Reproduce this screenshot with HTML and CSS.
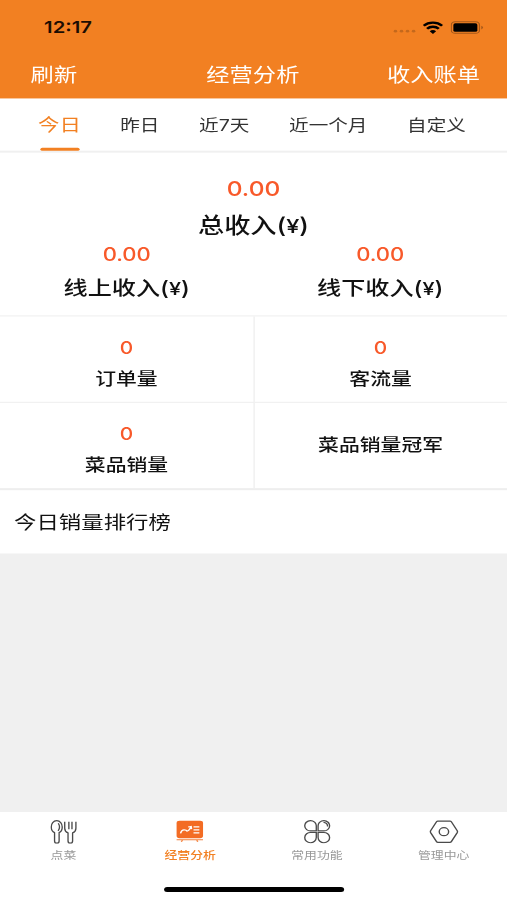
FILE: index.html
```html
<!DOCTYPE html>
<html lang="zh-CN">
<head>
  <meta charset="UTF-8" />
  <meta name="viewport" content="width=device-width, initial-scale=1" />
  <title>经营分析</title>
  <link rel="stylesheet" href="styles.css">
</head>
<body>
  <div class="screen">
    <header class="header">
      <div class="status">
        <span class="time">12:17</span>
        <div class="status-icons">
          <svg class="dots" width="19" height="4" viewBox="0 0 20 4"><g fill="#c4681c"><circle cx="2" cy="2" r="1.500"/><circle cx="7.200" cy="2" r="1.500"/><circle cx="12.400" cy="2" r="1.500"/><circle cx="17.600" cy="2" r="1.500"/></g></svg>
          <svg class="wifi" width="17" height="13" viewBox="0 0 17 13"><g fill="none" stroke="#000" stroke-width="2.3"><path d="M1 4.6a10.6 10.6 0 0 1 15 0"/><path d="M3.7 7.6a6.8 6.8 0 0 1 9.6 0"/></g><path d="M8.500 12.800L5.900 10.200a3.700 3.700 0 0 1 5.200 0z"/></svg>
          <svg class="battery" width="27" height="13" viewBox="0 0 27 13"><rect x=".5" y=".6" width="23" height="11.600" rx="3.200" fill="none" stroke="#a4571a"/><rect x="2.200" y="2.200" width="19.600" height="8.400" rx="1.600"/><path d="M25 4.700v3.600q1.400-.6 1.400-1.800t-1.400-1.800z" fill="#a4571a"/></svg>
        </div>
      </div>
      <nav class="nav">
        <span class="nav-left">刷新</span>
        <span class="nav-title">经营分析</span>
        <span class="nav-right">收入账单</span>
      </nav>
    </header>

    <div class="tabs">
      <span class="tab active">今日</span>
      <span class="tab">昨日</span>
      <span class="tab">近7天</span>
      <span class="tab">近一个月</span>
      <span class="tab">自定义</span>
    </div>

    <section class="income">
      <div class="total">
        <div class="value">0.00</div>
        <div class="label">总收入(<span class="yen">¥</span>)</div>
      </div>
      <div class="split">
        <div class="part">
          <div class="value">0.00</div>
          <div class="label">线上收入(<span class="yen">¥</span>)</div>
        </div>
        <div class="part">
          <div class="value">0.00</div>
          <div class="label">线下收入(<span class="yen">¥</span>)</div>
        </div>
      </div>
    </section>

    <section class="grid">
      <div class="cell"><div class="value">0</div><div class="label">订单量</div></div>
      <div class="cell"><div class="value">0</div><div class="label">客流量</div></div>
      <div class="cell"><div class="value">0</div><div class="label">菜品销量</div></div>
      <div class="cell"><div class="label">菜品销量冠军</div></div>
    </section>

    <div class="ranking">今日销量排行榜</div>
    <main class="list"></main>

    <footer class="tabbar">
      <div class="items">
        <div class="item">
          <svg width="22" height="24" viewBox="0 0 26 24" preserveAspectRatio="none" fill="none" stroke="#4a4a4a" stroke-width="1.300" stroke-linejoin="round"><path d="M6.300 1C3 1 1 4 1 7.300c0 2.800 1.200 4.700 3.200 5.700v8.200a2.200 2.200 0 0 0 4.400 0V13c2-1 3-2.900 3-5.700C11.600 4 9.500 1 6.300 1z"/><path d="M7.800 3.600c1.500 2.400 1.500 5.400-.2 7.600"/><path d="M14 2.200v6.300c0 2.300 1.200 3.800 3.200 4.700v8a2.200 2.200 0 0 0 4.400 0v-8c2-.9 3.200-2.400 3.200-4.700V2.200M18 2.200v7.300M21 2.200v7.300"/></svg>
          <span>点菜</span>
        </div>
        <div class="item active">
          <svg width="26" height="24" viewBox="0 0 26 24" preserveAspectRatio="none"><rect x="2.200" y="1.200" width="21.600" height="17.300" rx="2.400" fill="#f36c24"/><path d="M2.200 20h21.600M7 20.600l-1 1.400M18.600 20.600l1 1.400" fill="none" stroke="#f4803c" stroke-width="1.100"/><path d="M5.400 13.700q.8-3.400 2.800-3.500t2.500 1.200q1.600-.2 3.200-4.300M11.600 7.300l2.500-.5.300 2.600M16 7.200h4.800M16 10.200h4.800M16 13.200h4.800" fill="none" stroke="#fff" stroke-width="1.200"/></svg>
          <span>经营分析</span>
        </div>
        <div class="item">
          <svg width="24" height="24" viewBox="0 0 26 24" preserveAspectRatio="none" fill="none" stroke="#4a4a4a" stroke-width="1.200"><path d="M12.200 11.200H7.400A5.100 5.100 0 1 1 12.200 6.100z"/><path d="M13.800 11.200h4.800a5.100 5.100 0 1 0-4.800-5.100z"/><path d="M12.200 12.800H7.400a5.100 5.100 0 1 0 4.800 5.100z"/><path d="M13.800 12.800h4.800a5.100 5.100 0 1 1-4.800 5.100z"/><path d="M18.600 2.800q3.600.4 3.600 4"/></svg>
          <span>常用功能</span>
        </div>
        <div class="item">
          <svg width="25" height="24" viewBox="0 0 26 24" preserveAspectRatio="none" fill="none" stroke="#4a4a4a" stroke-width="1.200" stroke-linejoin="round"><path d="M7.900 1.400h10.200q.8 0 1.200.7l5 9q.4.900 0 1.800l-5 9q-.4.700-1.200.7H7.900q-.8 0-1.200-.7l-5-9q-.4-.9 0-1.800l5-9q.4-.7 1.200-.7z"/><circle cx="13" cy="12" r="4"/></svg>
          <span>管理中心</span>
        </div>
      </div>
      <div class="home-bar"></div>
    </footer>
  </div>
</body>
</html>
```

FILE: styles.css
```css
* { box-sizing: border-box; }
body { margin: 0; overflow: hidden; background: #fff; font-family: Inter, "Noto Sans CJK SC", sans-serif; color: #111; }

/* 414x896 layout, stretched to fill the window */
.screen { width: 414px; height: 896px; display: flex; flex-direction: column; transform: scale(1.22464, 1.00446); transform-origin: 0 0; white-space: nowrap; }

.header { height: 97.5px; background: #f28022; flex: none; }
.status { height: 51px; display: flex; justify-content: space-between; padding: 17px 19.500px 0 36px; }
.time { font-size: 16.500px; font-weight: 600; line-height: 21px; color: #1c0d02; }
.status-icons { display: flex; height: 20px; align-items: center; }
.dots { margin: 8px 5px 0 0; }
.battery { margin-left: 6px; }
.nav { height: 44px; display: grid; grid-template-columns: 1fr auto 1fr; align-items: center; padding: 0 22px 0 25px; color: #fff; font-size: 19px; }
.nav-title { margin-left: -4px; }
.nav-right { text-align: right; }

.tabs { height: 54.500px; flex: none; display: flex; padding-left: 15px; border-bottom: 2px solid #f0f0f0; font-size: 16px; color: #333; }
.tab { padding: 0 16.200px; line-height: 52px; }
.tab.active { position: relative; padding: 0 16px; font-size: 17.500px; color: #f28022; }
.tab.active::after { content: ""; position: absolute; left: 17.500px; right: 17px; bottom: 0; height: 3px; border-radius: 2px; background: #f28022; }

.value { color: #f8592a; font-weight: 500; }
.label { font-weight: 500; }
.yen { font-size: 0.9em; }
.income { height: 162px; flex: none; padding-top: 21.500px; text-align: center; }
.total .value { font-size: 20px; line-height: 29px; }
.total .label { font-size: 21.400px; line-height: 43px; }
.split { display: flex; }
.part { flex: 1; }
.part .value { font-size: 18px; line-height: 14px; }
.part .label { font-size: 19.700px; line-height: 53px; }

.grid { height: 174px; flex: none; display: grid; grid-template-columns: 207.500px 206.500px; grid-template-rows: 85.500px 85.500px; border-top: 1px solid #eee; border-bottom: 2px solid #eee; text-align: center; }
.cell { display: flex; flex-direction: column; justify-content: center; padding-top: 10px; border-bottom: 1px solid #eee; }
.cell:nth-child(odd) { border-right: 1px solid #eee; }
.cell:nth-child(n+3) { border-bottom: 0; }
.cell:last-child { padding: 0; }
.cell .value { font-size: 17px; line-height: 30px; }
.cell .label { font-size: 17px; line-height: 32px; }

.ranking { height: 63px; flex: none; padding-left: 11.500px; font-size: 18.300px; line-height: 64px; }
.list { flex: 1; background: #f0f0f0; }

.tabbar { height: 89px; flex: none; border-top: 1px solid #e6e6e6; }
.items { display: flex; height: 74.500px; padding-top: 8px; }
.item { flex: 1; display: flex; flex-direction: column; align-items: center; font-size: 10.500px; color: #999; }
.item span { line-height: 24px; }
.item.active { color: #f28022; font-weight: 500; }
.home-bar { width: 147px; height: 5px; margin: 0 auto; border-radius: 3px; background: #000; }
```
